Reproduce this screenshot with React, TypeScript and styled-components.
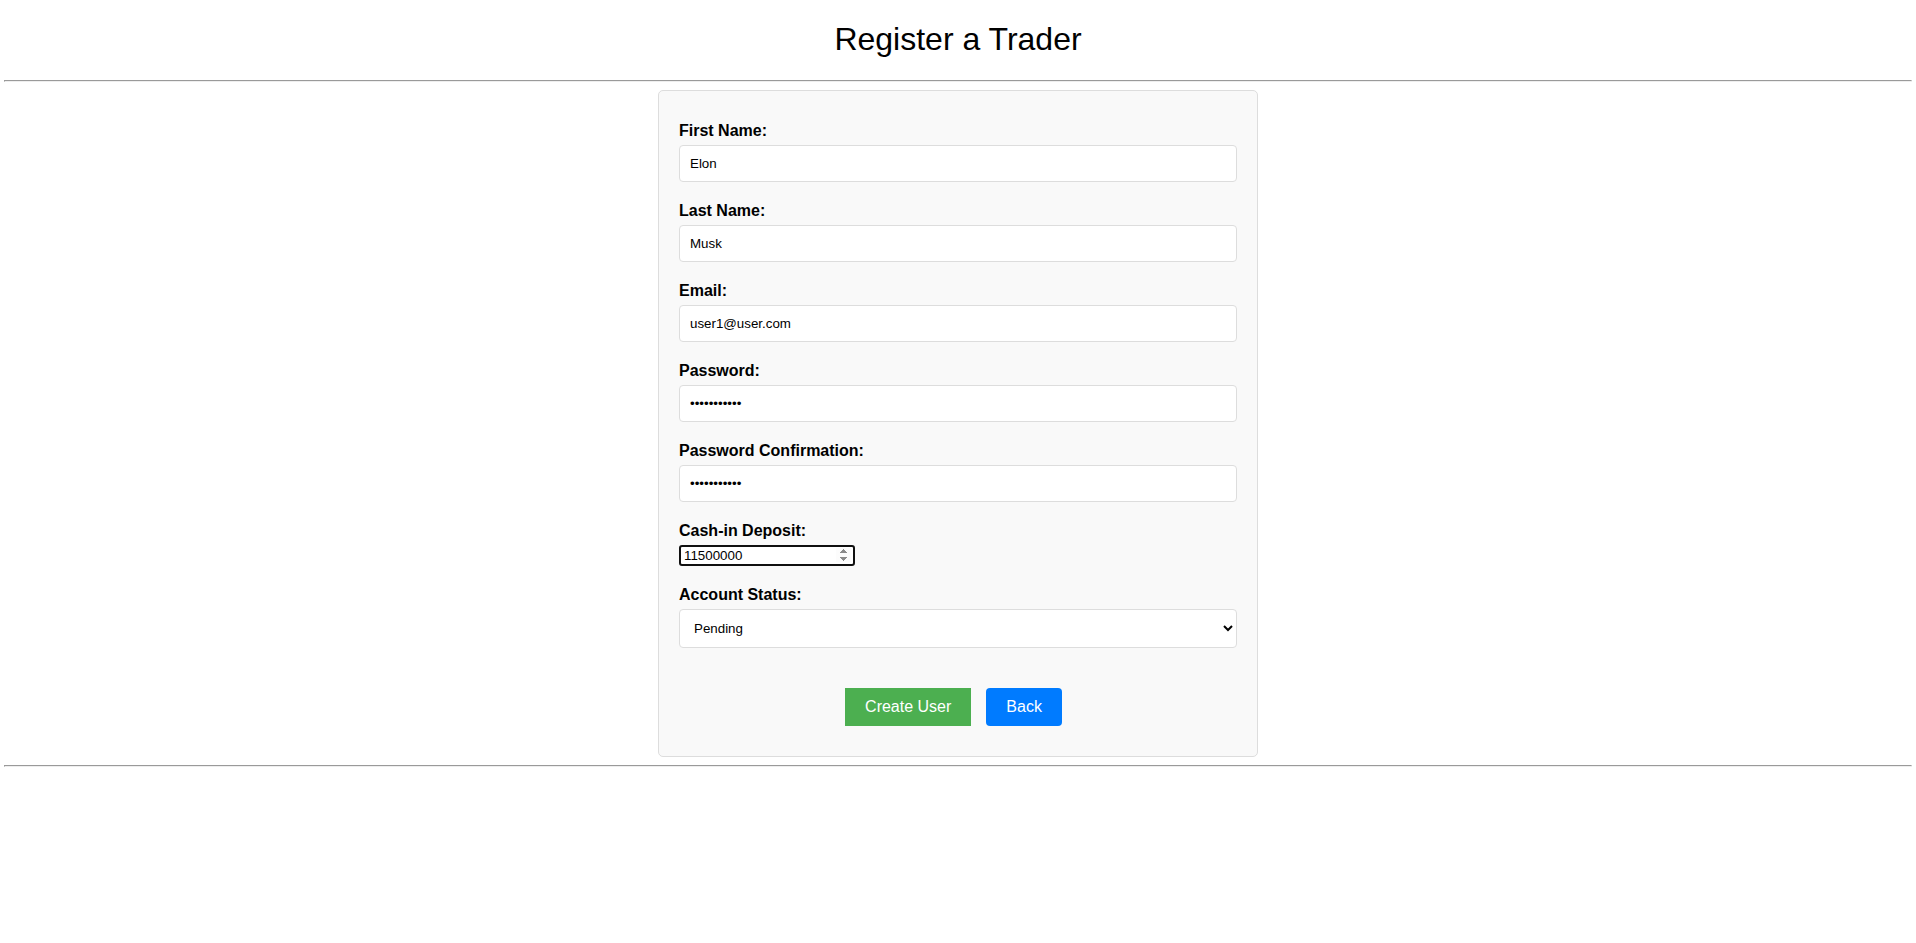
import React from "react";
import styled, { createGlobalStyle } from "styled-components";

const GlobalStyle = createGlobalStyle`
  html, body {
    margin: 0;
    padding: 0;
    background: #ffffff;
    font-family: "Liberation Sans", Arial, sans-serif;
    color: #000;
  }
  input[type="number"]::-webkit-inner-spin-button,
  input[type="number"]::-webkit-outer-spin-button {
    opacity: 1;
  }
`;

const Page = styled.div`
  display: block;
`;

const Title = styled.h1`
  margin: 21.44px 0;
  font-size: 32px;
  font-weight: normal;
  text-align: center;
  font-family: "Liberation Sans", Arial, sans-serif;
`;

const Rule = styled.hr`
  width: 99.5%;
  margin: 8px auto;
  border-width: 1px;
  border-style: solid;
  border-color: #9a9a9a #eeeeee #eeeeee #9a9a9a;
  height: 0;
  box-sizing: content-box;
`;

const Card = styled.div`
  width: 600px;
  box-sizing: border-box;
  margin: 0 auto;
  background: #f9f9f9;
  border: 1px solid #dddddd;
  border-radius: 5px;
  padding: 30.7px 20px 29.8px;
`;

const Form = styled.form`
  display: flex;
  flex-direction: column;
`;

const Group = styled.div`
  display: flex;
  flex-direction: column;
  align-items: flex-start;
  margin-bottom: 20px;
`;

const Label = styled.label`
  display: block;
  font-weight: bold;
  font-size: 16px;
  margin-bottom: 5px;
`;

const TextInput = styled.input`
  width: 100%;
  box-sizing: border-box;
  padding: 10px;
  border: 1px solid #dddddd;
  border-radius: 4px;
  background: #ffffff;
  font-family: "Liberation Sans", Arial, sans-serif;
  font-size: 13.333px;
  color: #000;
  outline: none;
  margin: 0;
`;

const NumberInput = styled.input`
  width: 176px;
  box-sizing: border-box;
  padding: 1px 2px 1px 3px;
  border: 2px solid #101010;
  border-radius: 3px;
  background: #ffffff;
  font-family: "Liberation Sans", Arial, sans-serif;
  font-size: 13.333px;
  color: #000;
  outline: none;
  margin: 0;
`;

const Select = styled.select`
  width: 100%;
  box-sizing: border-box;
  padding: 10px;
  border: 1px solid #dddddd;
  border-radius: 4px;
  background: #ffffff;
  font-family: "Liberation Sans", Arial, sans-serif;
  font-size: 13.333px;
  color: #000;
  margin: 0;
  outline: none;
`;

const ButtonRow = styled.div`
  display: flex;
  justify-content: center;
  gap: 15px;
  margin-top: 20.7px;
  padding-right: 9px;
`;

const Button = styled.button<{ $variant: "green" | "blue" }>`
  padding: 10px 20px;
  border: none;
  border-radius: ${(p) => (p.$variant === "blue" ? "4px" : "0")};
  background: ${(p) => (p.$variant === "blue" ? "#007bff" : "#4caf50")};
  color: #ffffff;
  font-family: "Liberation Sans", Arial, sans-serif;
  font-size: 16px;
  line-height: normal;
  cursor: pointer;
`;

export default function App() {
  return (
    <Page>
      <GlobalStyle />
      <Title>Register a Trader</Title>
      <Rule />
      <Card>
        <Form onSubmit={(e) => e.preventDefault()}>
          <Group>
            <Label htmlFor="first">First Name:</Label>
            <TextInput id="first" type="text" defaultValue="Elon" />
          </Group>
          <Group>
            <Label htmlFor="last">Last Name:</Label>
            <TextInput id="last" type="text" defaultValue="Musk" />
          </Group>
          <Group>
            <Label htmlFor="email">Email:</Label>
            <TextInput id="email" type="email" defaultValue="user1@user.com" />
          </Group>
          <Group>
            <Label htmlFor="pw">Password:</Label>
            <TextInput id="pw" type="password" defaultValue="Password123" />
          </Group>
          <Group>
            <Label htmlFor="pwc">Password Confirmation:</Label>
            <TextInput id="pwc" type="password" defaultValue="Password123" />
          </Group>
          <Group>
            <Label htmlFor="cash">Cash-in Deposit:</Label>
            <NumberInput id="cash" type="number" defaultValue={11500000} />
          </Group>
          <Group>
            <Label htmlFor="status">Account Status:</Label>
            <Select id="status" defaultValue="pending">
              <option value="pending">Pending</option>
              <option value="approved">Approved</option>
            </Select>
          </Group>
          <ButtonRow>
            <Button type="submit" $variant="green">Create User</Button>
            <Button type="button" $variant="blue">Back</Button>
          </ButtonRow>
        </Form>
      </Card>
      <Rule />
    </Page>
  );
}
